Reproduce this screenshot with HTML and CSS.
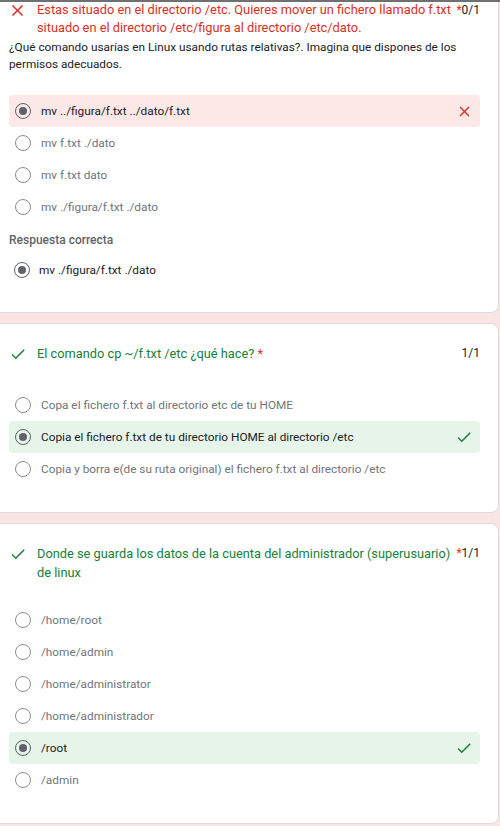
FILE: index.html
```html
<!DOCTYPE html>
<html lang="es">
<head>
<meta charset="utf-8">
<title>Respuestas</title>
<link rel="stylesheet" href="styles.css">
</head>
<body>
<div class="topbar"></div>
<main class="list">
  <section class="card card-first">
    <div class="q-head">
      <span class="q-icon"><svg class="ic-x" viewBox="0 0 24 24" width="19" height="19"><path fill="#d93025" d="M19 6.41L17.59 5 12 10.590 6.41 5 5 6.41 10.59 12 5 17.59 6.41 19 12 13.41 17.59 19 19 17.59 13.41 12z"/></svg></span>
      <h2 class="q-title wrong">Estas situado en el directorio /etc. Quieres mover un fichero llamado f.txt situado en el directorio /etc/figura al directorio /etc/dato.</h2>
      <span class="q-score"><span class="req">*</span>0/1</span>
    </div>
    <p class="q-desc">¿Qué comando usarías en Linux usando rutas relativas?. Imagina que dispones de los permisos adecuados.</p>
    <ul class="opts opts-first">
      <li class="opt sel bad"><span class="radio on"></span><span class="opt-text">mv ../figura/f.txt ../dato/f.txt</span><svg class="mark" viewBox="0 0 24 24" width="17" height="17"><path fill="#d93025" d="M19 6.41L17.590 5 12 10.59 6.41 5 5 6.41 10.59 12 5 17.59 6.41 19 12 13.41 17.59 19 19 17.59 13.41 12z"/></svg></li>
      <li class="opt"><span class="radio"></span><span class="opt-text">mv f.txt ./dato</span></li>
      <li class="opt"><span class="radio"></span><span class="opt-text">mv f.txt dato</span></li>
      <li class="opt"><span class="radio"></span><span class="opt-text">mv ./figura/f.txt ./dato</span></li>
    </ul>
    <div class="correct-label">Respuesta correcta</div>
    <div class="opt correct-opt"><span class="radio on"></span><span class="opt-text">mv ./figura/f.txt ./dato</span></div>
  </section>

  <section class="card card-second">
    <div class="q-head">
      <span class="q-icon"><svg viewBox="0 0 24 24" width="18" height="18"><path fill="#188038" d="M9 16.17L4.83 12l-1.42 1.41L9 19 21 7l-1.41-1.41z"/></svg></span>
      <h2 class="q-title right">El comando cp ~/f.txt /etc ¿qué hace? <span class="req">*</span></h2>
      <span class="q-score">1/1</span>
    </div>
    <ul class="opts opts-second">
      <li class="opt"><span class="radio"></span><span class="opt-text">Copa el fichero f.txt al directorio etc de tu HOME</span></li>
      <li class="opt sel good"><span class="radio on"></span><span class="opt-text">Copia el fichero f.txt de tu directorio HOME al directorio /etc</span><svg class="mark" viewBox="0 0 24 24" width="18" height="18"><path fill="#188038" d="M9 16.17L4.83 12l-1.42 1.41L9 19 21 7l-1.41-1.41z"/></svg></li>
      <li class="opt"><span class="radio"></span><span class="opt-text">Copia y borra e(de su ruta original) el fichero f.txt al directorio /etc</span></li>
    </ul>
  </section>

  <section class="card card-third">
    <div class="q-head">
      <span class="q-icon"><svg viewBox="0 0 24 24" width="18" height="18"><path fill="#188038" d="M9 16.17L4.83 12l-1.42 1.41L9 19 21 7l-1.41-1.41z"/></svg></span>
      <h2 class="q-title right">Donde se guarda los datos de la cuenta del administrador (superusuario) de linux</h2>
      <span class="q-score"><span class="req">*</span>1/1</span>
    </div>
    <ul class="opts opts-third">
      <li class="opt"><span class="radio"></span><span class="opt-text">/home/root</span></li>
      <li class="opt"><span class="radio"></span><span class="opt-text">/home/admin</span></li>
      <li class="opt"><span class="radio"></span><span class="opt-text">/home/administrator</span></li>
      <li class="opt"><span class="radio"></span><span class="opt-text">/home/administrador</span></li>
      <li class="opt sel good"><span class="radio on"></span><span class="opt-text">/root</span><svg class="mark" viewBox="0 0 24 24" width="18" height="18"><path fill="#188038" d="M9 16.17L4.83 12l-1.42 1.41L9 19 21 7l-1.41-1.41z"/></svg></li>
      <li class="opt"><span class="radio"></span><span class="opt-text">/admin</span></li>
    </ul>
  </section>
</main>
</body>
</html>
```

FILE: styles.css
```css
* { box-sizing: border-box; }

html, body {
  margin: 0;
  padding: 0;
}

body {
  background: #fbe4e4;
  font-family: Roboto, "Liberation Sans", Arial, sans-serif;
  color: #202124;
  overflow: hidden;
  height: 826px;
}

.topbar {
  height: 2px;
  background: #707070;
}

.list {
  display: flex;
  flex-direction: column;
  gap: 10px;
}

.card {
  background: #fff;
  border: 1px solid #dadce0;
  border-radius: 8px;
  margin-left: -9px;
  width: 508px;
  padding: 20px 18px 27px 17px;
}

.card-first {
  border-top: none;
  border-radius: 0 0 8px 8px;
  padding-top: 0;
  padding-bottom: 26px;
}

.q-head {
  display: flex;
  align-items: flex-start;
}

.q-icon {
  width: 28px;
  flex: none;
  display: flex;
  align-items: center;
  height: 19px;
}

.ic-x { margin-left: -1px; }

.q-title {
  flex: 1;
  margin: 0;
  font-size: 12.8px;
  font-weight: 400;
  line-height: 19px;
  padding-right: 4px;
}

.card-first .q-title { margin-top: -1px; line-height: 18px; }
.card-first .q-icon { margin-top: -1px; }

.q-title.wrong { color: #d93025; }
.q-title.right { color: #188038; }

.req { color: #d93025; }

.q-score {
  flex: none;
  font-size: 12px;
  line-height: 19px;
  color: #202124;
}

.card-first .q-score { margin-top: -1px; line-height: 18px; }

.q-desc {
  margin: 2px 0 0;
  font-size: 11.8px;
  line-height: 17px;
  color: #202124;
}

.opts {
  list-style: none;
  margin: 0;
  padding: 0;
}

.opts-first { margin-top: 22px; }
.opts-second { margin-top: 26px; }
.opts-third { margin-top: 22px; }

.opt {
  display: flex;
  align-items: center;
  height: 32px;
  padding: 0 7px 0 6px;
  border-radius: 4px;
  font-size: 11.8px;
  color: #70757a;
}

.opt.sel { color: #202124; }
.opt.bad { background: #fce8e6; }
.opt.good { background: #e6f4ea; }

.radio {
  width: 16px;
  height: 16px;
  border-radius: 50%;
  border: 1.5px solid #8a8d91;
  flex: none;
  margin-right: 10px;
  display: flex;
  align-items: center;
  justify-content: center;
}

.radio.on {
  border: 1.5px solid #5f6368;
}

.radio.on::after {
  content: "";
  width: 8px;
  height: 8px;
  border-radius: 50%;
  background: #5f6368;
}

.opt-text { flex: 1; }

.mark { flex: none; }

.correct-label {
  margin-top: 9px;
  font-size: 12px;
  line-height: 16px;
  font-weight: 500;
  color: #5f6368;
}

.correct-opt {
  margin-top: 6px;
  padding-left: 5px;
  color: #202124;
}

.correct-opt .radio { margin-right: 9px; }
```
